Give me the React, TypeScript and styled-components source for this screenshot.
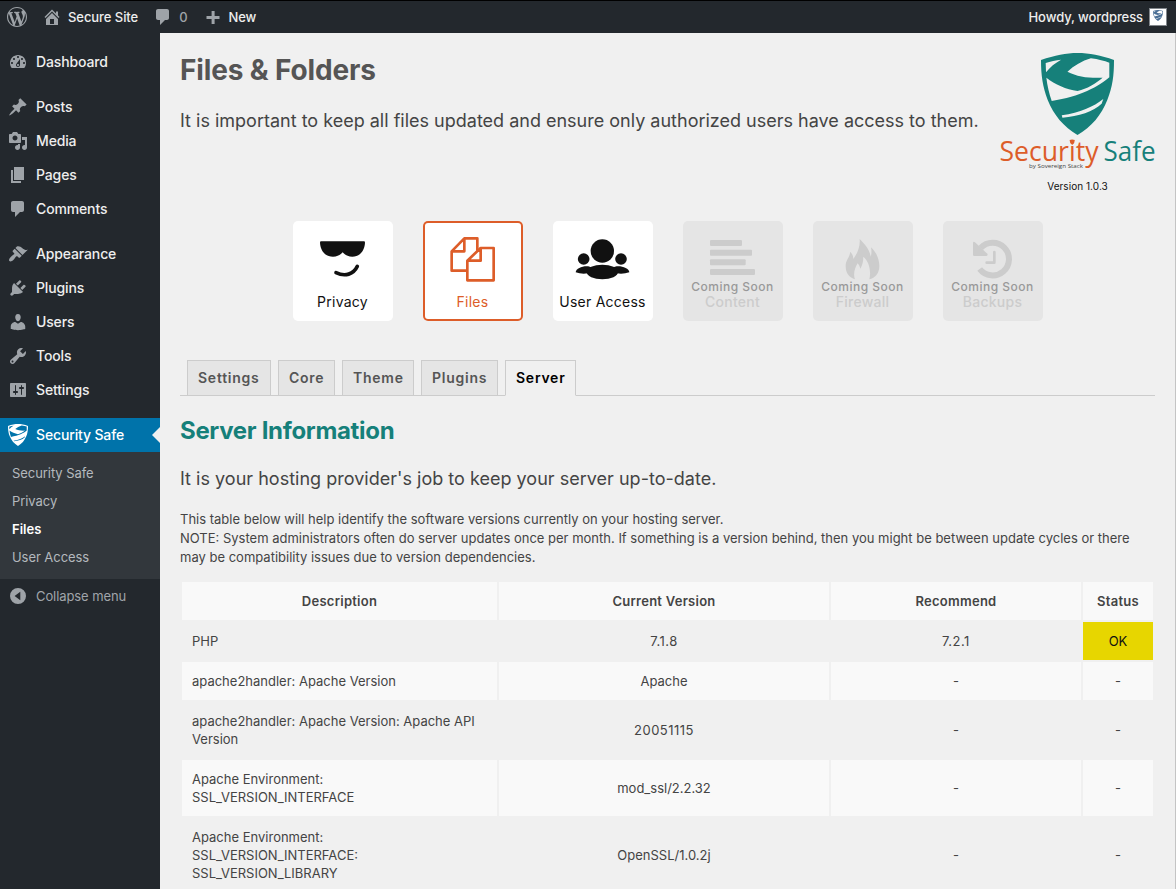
import React from "react";
import styled, { createGlobalStyle, css } from "styled-components";

const GlobalStyle = createGlobalStyle`
  *, *::before, *::after { box-sizing: border-box; }
  html, body { margin: 0; padding: 0; }
  body {
    background: #f0f0f0;
    color: #444;
    font-family: Inter, "Liberation Sans", sans-serif;
    font-size: 13px;
    overflow: hidden;
  }
  h1, h2, p { margin: 0; }
`;

const Page = styled.div`
  display: flex;
  flex-direction: column;
  height: 889px;
  overflow: hidden;
`;

const AdminBar = styled.header`
  display: flex;
  align-items: center;
  flex: none;
  height: 33px;
  padding: 0 9px 0 7px;
  border-top: 1px solid #000;
  background: #23282d;
  color: #eee;
  font-weight: 500;
`;

const BarItem = styled.div<{ $gap: number; $after?: number; $spacing?: string; $muted?: boolean }>`
  display: flex;
  align-items: center;
  gap: ${(p) => p.$gap}px;
  margin-right: ${(p) => p.$after ?? 0}px;
  letter-spacing: ${(p) => p.$spacing ?? "0"};
  color: ${(p) => (p.$muted ? "#9ea3a8" : "#eee")};
`;

const Account = styled(BarItem)`
  margin-left: auto;
  letter-spacing: -0.09px;
`;

const Avatar = styled.span`
  display: flex;
  justify-content: center;
  width: 18px;
  height: 18px;
  padding-top: 1px;
  border: 1px solid #82878c;
  background: #fff;
`;

const Glyph = styled.svg`
  display: block;
  flex: none;
  fill: #9ea3a8;
`;

const Body = styled.div`
  display: flex;
  flex: 1;
  min-height: 0;
`;

const Sidebar = styled.nav`
  flex: none;
  width: 160px;
  padding-top: 12px;
  background: #23282d;
`;

const MenuGroup = styled.div`
  margin-bottom: 11px;
`;

const MenuItem = styled.div<{ $active?: boolean }>`
  position: relative;
  display: flex;
  align-items: center;
  gap: 8px;
  height: 34px;
  padding-left: 8px;
  color: #eee;
  font-size: 14px;
  font-weight: 500;
  letter-spacing: -0.14px;
  ${(p) =>
    p.$active &&
    css`
      background: #0073aa;
      color: #fff;
      &::after {
        content: "";
        position: absolute;
        right: 0;
        top: 9px;
        border: 8px solid transparent;
        border-right-color: #f0f0f0;
        border-left-width: 0;
      }
    `}
`;

const MenuText = styled.span`
  padding-bottom: 2px;
`;

const SubMenu = styled.div`
  padding: 7px 0 8px 12px;
  background: #32373c;
`;

const SubItem = styled.div<{ $current?: boolean }>`
  height: 28px;
  line-height: 28px;
  letter-spacing: ${(p) => (p.$current ? "0.04px" : "-0.06px")};
  color: ${(p) => (p.$current ? "#fff" : "#b4b9be")};
  font-weight: ${(p) => (p.$current ? 600 : 400)};
`;

const Collapse = styled.div`
  display: flex;
  align-items: center;
  gap: 8px;
  height: 34px;
  padding-left: 8px;
  color: #a0a5aa;
  letter-spacing: -0.09px;
`;

const Main = styled.main`
  flex: 1;
  min-width: 0;
  padding: 0 20px;
  border-right: 1px solid #c4c4c4;
`;

const Head = styled.div`
  display: flex;
  justify-content: space-between;
  height: 188px;
`;

const Title = styled.h1`
  margin-top: 20px;
  color: #555;
  font-size: 28px;
  font-weight: 700;
  line-height: 34px;
  letter-spacing: -0.13px;
`;

const Lead = styled.p`
  color: #444;
  font-size: 18px;
  line-height: 26px;
  white-space: nowrap;
`;

const HeadLead = styled(Lead)`
  margin-top: 21px;
`;

const Brand = styled.div`
  display: flex;
  flex-direction: column;
  align-items: center;
  flex: none;
  width: 156px;
  padding-top: 20px;
  color: #222;
`;

const Version = styled.span`
  padding-left: 1px;
  font-size: 10px;
  line-height: 14px;
  color: #111;
  letter-spacing: 0.05px;
`;

const Cards = styled.div`
  display: flex;
  justify-content: center;
  gap: 30px;
  padding-left: 1px;
`;

const Card = styled.div<{ $tone: "plain" | "active" | "disabled" }>`
  position: relative;
  display: flex;
  flex-direction: column;
  align-items: center;
  width: 100px;
  height: 100px;
  border-radius: 5px;
  color: ${(p) => ({ plain: "#111", active: "#dd5d29", disabled: "#ccc" })[p.$tone]};
  background: ${(p) => (p.$tone === "disabled" ? "#e5e5e5" : "#fff")};
  box-shadow: ${(p) => (p.$tone === "active" ? "inset 0 0 0 2px #dd5d29" : "none")};
`;

const CardLabel = styled.span<{ $disabled?: boolean }>`
  margin-top: 2px;
  padding-right: 1px;
  font-size: 14px;
  line-height: 18px;
  font-weight: ${(p) => (p.$disabled ? 500 : 400)};
  letter-spacing: 0.25px;
  white-space: nowrap;
`;

const Soon = styled.span`
  position: absolute;
  top: 57px;
  left: 0;
  right: 1px;
  text-align: center;
  color: #999;
  font-size: 12px;
  line-height: 18px;
  font-weight: 500;
  letter-spacing: 0.5px;
  white-space: nowrap;
`;

const CardArt = styled.svg`
  display: block;
  width: 100px;
  height: 70px;
  fill: currentColor;
`;

const Tabs = styled.div`
  display: flex;
  gap: 7px;
  height: 36px;
  margin-top: 39px;
  padding-left: 7px;
  box-shadow: inset 0 -1px 0 #ccc;
`;

const Tab = styled.div<{ $w: number; $active?: boolean }>`
  width: ${(p) => p.$w}px;
  border: 1px solid #ccc;
  border-bottom-color: ${(p) => (p.$active ? "#f0f0f0" : "#ccc")};
  background: ${(p) => (p.$active ? "#f0f0f0" : "#e5e5e5")};
  color: ${(p) => (p.$active ? "#000" : "#555")};
  padding-left: 10px;
  font-size: 14px;
  font-weight: 600;
  line-height: 34px;
  letter-spacing: 0.75px;
`;

const Heading = styled.h2`
  margin-top: 19px;
  color: #16807a;
  font-size: 24px;
  font-weight: 700;
  line-height: 32px;
  letter-spacing: -0.32px;
`;

const SectionLead = styled(Lead)`
  margin-top: 19px;
  letter-spacing: 0.015px;
`;

const Notes = styled.p`
  margin: 18px 0 13px;
  line-height: 19px;
  white-space: nowrap;
`;

const Table = styled.table`
  width: 975px;
  table-layout: fixed;
  border-spacing: 2px;
  line-height: 18px;
`;

const Cell = styled.td<{ $left?: boolean; $ok?: boolean; $numeric?: boolean }>`
  padding: 10px;
  text-align: ${(p) => (p.$left ? "left" : "center")};
  vertical-align: middle;
  letter-spacing: ${(p) => (p.$numeric ? "0.5px" : "0")};
  ${(p) => p.$ok && "background: #e7d600 !important; color: #111;"}
`;

const Row = styled.tr<{ $light?: boolean }>`
  & > * { background: ${(p) => (p.$light ? "#f9f9f9" : "transparent")}; }
`;

const HeadCell = styled.th`
  padding: 10px 0;
  font-weight: 600;
  letter-spacing: 0.26px;
`;

const icons: Record<string, string> = {
  wordpress:
    "M20 10c0-5.51-4.49-10-10-10C4.48 0 0 4.49 0 10c0 5.52 4.48 10 10 10 5.51 0 10-4.48 10-10zM7.78 15.37L4.37 6.22c.55-.02 1.17-.08 1.17-.08.5-.06.44-1.13-.06-1.11 0 0-1.45.11-2.37.11-.18 0-.37 0-.58-.01C4.12 2.69 6.87 1.11 10 1.11c2.33 0 4.45.87 6.05 2.34-.68-.11-1.65.39-1.65 1.58 0 .74.45 1.36.9 2.1.35.61.55 1.36.55 2.46 0 1.49-1.4 5-1.4 5l-3.03-8.37c.54-.02.82-.17.82-.17.5-.05.44-1.25-.06-1.22 0 0-1.44.12-2.38.12-.87 0-2.33-.12-2.33-.12-.5-.03-.56 1.2-.06 1.22l.92.08 1.26 3.41zM17.41 10c.24-.64.74-1.87.43-4.25.7 1.29 1.05 2.71 1.05 4.25 0 3.29-1.73 6.24-4.4 7.78.97-2.59 1.94-5.2 2.92-7.78zM6.1 18.09C3.12 16.65 1.11 13.53 1.11 10c0-1.3.23-2.48.72-3.59C3.25 10.3 4.67 14.2 6.1 18.09zm4.03-6.63l2.58 6.98c-.86.29-1.76.45-2.71.45-.79 0-1.57-.11-2.29-.33.81-2.38 1.62-4.74 2.42-7.1z",
  home: "M16 8.5l1.53 1.53-1.06 1.06L10 4.6l-6.47 6.49-1.06-1.06L10 2.5l4 4v-2h2v4zm-6-2.46l6 5.99V18H4v-5.97zM12 17v-5H8v5h4z",
  plus: "M16.5 8.9h-4.9V4H8.6v4.9H3.5v3h5.1V17h3v-5.1h4.9z",
  dashboard:
    "M3.76 16h12.48c1.1-1.37 1.76-3.11 1.76-5 0-4.42-3.58-8-8-8s-8 3.58-8 8c0 1.89.66 3.63 1.76 5zM10 4c.55 0 1 .45 1 1s-.45 1-1 1-1-.45-1-1 .45-1 1-1zM6 6c.55 0 1 .45 1 1s-.45 1-1 1-1-.45-1-1 .45-1 1-1zm8 0c.55 0 1 .45 1 1s-.45 1-1 1-1-.45-1-1 .45-1 1-1zm-5.37 5.55L12 7v6c0 1.1-.9 2-2 2s-2-.9-2-2c0-.57.24-1.08.63-1.45zM4 10c.55 0 1 .45 1 1s-.45 1-1 1-1-.45-1-1 .45-1 1-1zm12 0c.55 0 1 .45 1 1s-.45 1-1 1-1-.45-1-1 .45-1 1-1zm-5 3c0-.55-.45-1-1-1s-1 .45-1 1 .45 1 1 1 1-.45 1-1z",
  posts:
    "M10.44 3.02l1.82-1.82 6.36 6.35-1.83 1.82c-1.05-.68-2.48-.57-3.41.36l-.75.75c-.92.93-1.04 2.35-.35 3.41l-1.83 1.82-2.41-2.41-2.8 2.79c-.42.42-3.38 2.71-3.8 2.29s1.86-3.39 2.28-3.81l2.79-2.79L4.1 9.36l1.83-1.82c1.05.69 2.48.57 3.4-.36l.75-.75c.93-.92 1.05-2.35.36-3.41z",
  media:
    "M13 11V4c0-.55-.45-1-1-1h-1.67L9 1H5L3.67 3H2c-.55 0-1 .45-1 1v7c0 .55.45 1 1 1h10c.55 0 1-.45 1-1zM7 4.5c1.38 0 2.5 1.12 2.5 2.5S8.38 9.5 7 9.5 4.5 8.38 4.5 7 5.62 4.5 7 4.5zM14 6h5v10.5c0 1.38-1.12 2.5-2.5 2.5S14 17.88 14 16.5s1.12-2.5 2.5-2.5c.17 0 .34.02.5.05V9h-3V6zm-4 8.05V13h2v3.5c0 1.38-1.12 2.5-2.5 2.5S7 17.88 7 16.5 8.12 14 9.5 14c.17 0 .34.02.5.05z",
  pages: "M6 15V2h10v13H6zm-1 1h8v2H3V5h2v11z",
  comments: "M5 2h9c1.1 0 2 .9 2 2v7c0 1.1-.9 2-2 2h-2l-5 5v-5H5c-1.1 0-2-.9-2-2V4c0-1.1.9-2 2-2z",
  appearance:
    "M14.48 11.06L7.41 3.99l1.5-1.5c.5-.56 2.3-.47 3.51.32 1.21.8 1.43 1.28 2.91 2.1 1.18.64 2.45 1.26 4.45.85zm-.71.71L6.7 4.7 4.93 6.47c-.39.39-.39 1.02 0 1.41l1.06 1.06c.39.39.39 1.03 0 1.42-.6.6-1.43 1.11-2.21 1.69-.35.26-.7.53-1.01.84C1.43 14.23.4 16.08 1.4 17.07c.99 1 2.84-.03 4.18-1.36.31-.31.58-.66.85-1.02.57-.78 1.08-1.61 1.69-2.21.39-.39 1.02-.39 1.41 0l1.06 1.06c.39.39 1.02.39 1.41 0z",
  plugins:
    "M13.11 4.36L9.87 7.6 8 5.73l3.24-3.24c.35-.34 1.05-.2 1.56.32.52.51.66 1.21.31 1.55zm-8 1.77l.91-1.12 9.01 9.01-1.19.84c-.71.71-2.63 1.16-3.82 1.16H6.14L4.9 17.26c-.59.59-1.54.59-2.12 0-.59-.58-.59-1.53 0-2.12l1.24-1.24v-3.88c0-1.13.4-3.19 1.09-3.89zm7.26 3.97l3.24-3.24c.34-.35 1.04-.21 1.55.31.52.51.66 1.21.31 1.55l-3.24 3.25z",
  users:
    "M10 9.25c-2.27 0-2.73-3.44-2.73-3.44C7 4.02 7.82 2 9.97 2c2.16 0 2.98 2.02 2.71 3.81 0 0-.41 3.44-2.68 3.44zm0 2.57L12.72 10c2.39 0 4.52 2.33 4.52 4.53v2.49s-3.65 1.13-7.24 1.13c-3.65 0-7.24-1.13-7.24-1.13v-2.49c0-2.25 1.94-4.48 4.47-4.48z",
  tools:
    "M16.68 9.77c-1.34 1.34-3.3 1.67-4.95.99l-5.41 6.52c-.99.99-2.59.99-3.58 0s-.99-2.59 0-3.57l6.52-5.42c-.68-1.65-.35-3.61.99-4.95 1.28-1.28 3.12-1.62 4.72-1.06l-2.89 2.89 2.82 2.82 2.86-2.87c.53 1.58.18 3.39-1.08 4.65zM3.81 16.21c.4.39 1.04.39 1.43 0 .4-.4.4-1.04 0-1.43-.39-.4-1.03-.4-1.43 0-.39.39-.39 1.03 0 1.43z",
  settings:
    "M18 16V4c0-.55-.45-1-1-1H3c-.55 0-1 .45-1 1v12c0 .55.45 1 1 1h14c.55 0 1-.45 1-1zM8 11h1c.55 0 1 .45 1 1s-.45 1-1 1H8v1.5c0 .28-.22.5-.5.5s-.5-.22-.5-.5V13H6c-.55 0-1-.45-1-1s.45-1 1-1h1V5.5c0-.28.22-.5.5-.5s.5.22.5.5V11zm5-2h-1c-.55 0-1-.45-1-1s.45-1 1-1h1V5.5c0-.28.22-.5.5-.5s.5.22.5.5V7h1c.55 0 1 .45 1 1s-.45 1-1 1h-1v5.5c0 .28-.22.5-.5.5s-.5-.22-.5-.5V9z",
  collapse: "M10 2a8 8 0 1 0 0 16a8 8 0 1 0 0-16zM12.3 5.8v8.4L6.6 10z",
};

function Icon({ name, size = 20 }: { name: string; size?: number }) {
  return (
    <Glyph viewBox="0 0 20 20" width={size} height={size} fillRule="evenodd">
      <path d={icons[name]} />
    </Glyph>
  );
}

function Shield({ width, height, color }: { width: number; height: number; color: string }) {
  return (
    <svg width={width} height={height} viewBox="33 24 218 246" preserveAspectRatio="none" fill={color} fillRule="evenodd">
      <path d="M33 45C75 31 108 24 142 24C177 24 212 31 251 45C251 92 247 125 231 165C213 210 184 246 142 270C101 246 71 210 53 165C38 125 33 92 33 45ZM47 54C60 49 78 45 93 44C75 54 60 66 48 82ZM182 40C205 43 222 48 237 53V97C205 125 150 155 65 168C57 145 52 122 49 98C75 118 108 133 142 138C172 131 195 116 217 98C180 100 142 96 112 80C132 62 155 48 182 40ZM219 162C190 185 150 203 95 211L97 218C145 213 190 200 214 176Z" />
    </svg>
  );
}

const WordmarkArt = styled.svg`
  display: block;
  overflow: visible;
`;

function Wordmark() {
  return (
    <WordmarkArt width="156" height="44" viewBox="0 0 156 44">
      <g fontFamily="'Open Sans', 'Noto Sans', sans-serif" fontSize="28">
        <text x="0.5" y="25.5" textLength="99" lengthAdjust="spacingAndGlyphs" fill="#dd5d29">Security</text>
        <text x="104.5" y="25.5" textLength="52" lengthAdjust="spacingAndGlyphs" fill="#16807a">Safe</text>
      </g>
      <path d="M70.6 5Q73.1 3.8 75.8 5Q75.8 8.4 73.2 10Q70.6 8.4 70.6 5Z" fill="#dd5d29" />
      <text x="30" y="33.3" fontFamily="'Open Sans', sans-serif" fontSize="5.8" fontWeight="500" textLength="54" lengthAdjust="spacingAndGlyphs" fill="#444">
        by Sovereign Stack
      </text>
    </WordmarkArt>
  );
}

const art = {
  privacy: (
    <CardArt viewBox="39 33 300 210">
      <path d="M123 94H252Q255 94 255 98C254 122 239 140 217 140C202 140 193 133 188 127C183 133 174 140 159 140C136 140 121 122 120 98Q120 94 123 94Z" />
      <path d="M168 188C195 201 221 193 232 169" fill="none" stroke="currentColor" strokeWidth="11" strokeLinecap="round" />
    </CardArt>
  ),
  files: (
    <CardArt viewBox="429 33 300 210">
      <g fill="none" stroke="currentColor" strokeWidth="8" strokeLinejoin="round">
        <path d="M562 182H515V124L553 85H592V122M553 85V124H515" />
        <path d="M562 152L602 114H641V211H562ZM602 114V152H562" />
      </g>
    </CardArt>
  ),
  users: (
    <CardArt viewBox="819 33 300 210">
      <circle cx="967" cy="123" r="35" />
      <circle cx="911" cy="147" r="17.5" />
      <circle cx="1023" cy="147" r="17.5" />
      <ellipse cx="967" cy="186" rx="47" ry="22" />
      <path d="M887 187C888 171 924 163 937 174L924 190Q904 193 887 187Z" />
      <path d="M1048 187C1047 171 1010 163 997 174L1010 190Q1030 193 1048 187Z" />
    </CardArt>
  ),
  content: (
    <CardArt viewBox="39 33 300 210">
      <rect x="120" y="90" width="96" height="18" rx="3" />
      <rect x="120" y="119" width="126" height="18" rx="3" />
      <rect x="120" y="148" width="107" height="18" rx="3" />
      <rect x="120" y="177" width="135" height="18" rx="3" />
    </CardArt>
  ),
  firewall: (
    <CardArt viewBox="429 33 300 210">
      <path d="M569 87C585 103 600 120 602 140C605 132 605 120 603 112C620 128 628 148 628 168C628 190 615 205 598 208C604 185 598 155 580 140C580 155 577 165 571 176C569 168 566 163 563 160C556 172 548 190 555 208C538 203 527 190 527 168C527 150 538 145 541 125C546 130 550 138 550 147C562 130 571 110 569 87Z" />
    </CardArt>
  ),
  backups: (
    <CardArt viewBox="819 33 300 210">
      <path d="M932 114A49 49 0 1 1 929 177" fill="none" stroke="currentColor" strokeWidth="18" />
      <path d="M909 98Q910 93 915 97L952 131Q955 137 949 138H913Q909 138 909 134Z" />
      <path d="M973 126V158H950" fill="none" stroke="currentColor" strokeWidth="8" strokeLinecap="round" strokeLinejoin="round" />
    </CardArt>
  ),
};

const cards: { label: string; art: keyof typeof art; tone: "plain" | "active" | "disabled" }[] = [
  { label: "Privacy", art: "privacy", tone: "plain" },
  { label: "Files", art: "files", tone: "active" },
  { label: "User Access", art: "users", tone: "plain" },
  { label: "Content", art: "content", tone: "disabled" },
  { label: "Firewall", art: "firewall", tone: "disabled" },
  { label: "Backups", art: "backups", tone: "disabled" },
];

const menu = [
  ["Dashboard"],
  ["Posts", "Media", "Pages", "Comments"],
  ["Appearance", "Plugins", "Users", "Tools", "Settings"],
];

const tabs: [string, number][] = [
  ["Settings", 84],
  ["Core", 57],
  ["Theme", 72],
  ["Plugins", 77],
  ["Server", 71],
];

const rows = [
  ["PHP", "7.1.8", "7.2.1", "OK"],
  ["apache2handler: Apache Version", "Apache", "-", "-"],
  ["apache2handler: Apache Version: Apache API Version", "20051115", "-", "-"],
  ["Apache Environment: SSL_VERSION_INTERFACE", "mod_ssl/2.2.32", "-", "-"],
  ["Apache Environment: SSL_VERSION_INTERFACE: SSL_VERSION_LIBRARY", "OpenSSL/1.0.2j", "-", "-"],
];

export default function App() {
  return (
    <Page>
      <GlobalStyle />
      <AdminBar>
        <BarItem $gap={0} $after={15}>
          <Icon name="wordpress" />
        </BarItem>
        <BarItem $gap={6} $after={15} $spacing="-0.06px">
          <Icon name="home" />
          Secure Site
        </BarItem>
        <BarItem $gap={6} $after={15} $muted>
          <Icon name="comments" />
          0
        </BarItem>
        <BarItem $gap={6} $spacing="-0.2px">
          <Icon name="plus" />
          New
        </BarItem>
        <Account $gap={6}>
          Howdy, wordpress
          <Avatar>
            <Shield width={10} height={11} color="#4a6f95" />
          </Avatar>
        </Account>
      </AdminBar>
      <Body>
        <Sidebar>
          {menu.map((group) => (
            <MenuGroup key={group[0]}>
              {group.map((item) => (
                <MenuItem key={item}>
                  <Icon name={item.toLowerCase()} />
                  <MenuText>{item}</MenuText>
                </MenuItem>
              ))}
            </MenuGroup>
          ))}
          <MenuItem $active>
            <Shield width={20} height={22} color="#fff" />
            <MenuText>Security Safe</MenuText>
          </MenuItem>
          <SubMenu>
            {["Security Safe", "Privacy", "Files", "User Access"].map((item) => (
              <SubItem key={item} $current={item === "Files"}>
                {item}
              </SubItem>
            ))}
          </SubMenu>
          <Collapse>
            <Icon name="collapse" />
            Collapse menu
          </Collapse>
        </Sidebar>
        <Main>
          <Head>
            <div>
              <Title>Files &amp; Folders</Title>
              <HeadLead>It is important to keep all files updated and ensure only authorized users have access to them.</HeadLead>
            </div>
            <Brand>
              <Shield width={73} height={82} color="#16807a" />
              <Wordmark />
              <Version>Version 1.0.3</Version>
            </Brand>
          </Head>
          <Cards>
            {cards.map((card) => (
              <Card key={card.label} $tone={card.tone}>
                {art[card.art]}
                {card.tone === "disabled" && <Soon>Coming Soon</Soon>}
                <CardLabel $disabled={card.tone === "disabled"}>{card.label}</CardLabel>
              </Card>
            ))}
          </Cards>
          <Tabs>
            {tabs.map(([label, width]) => (
              <Tab key={label} $w={width} $active={label === "Server"}>
                {label}
              </Tab>
            ))}
          </Tabs>
          <Heading>Server Information</Heading>
          <SectionLead>It is your hosting provider's job to keep your server up-to-date.</SectionLead>
          <Notes>
            This table below will help identify the software versions currently on your hosting server.
            <br />
            NOTE: System administrators often do server updates once per month. If something is a version behind, then you might be between update cycles or there
            <br />
            may be compatibility issues due to version dependencies.
          </Notes>
          <Table>
            <colgroup>
              <col style={{ width: 315 }} />
              <col style={{ width: 330 }} />
              <col style={{ width: 250 }} />
              <col style={{ width: 70 }} />
            </colgroup>
            <thead>
              <Row $light>
                {["Description", "Current Version", "Recommend", "Status"].map((name) => (
                  <HeadCell key={name}>{name}</HeadCell>
                ))}
              </Row>
            </thead>
            <tbody>
              {rows.map((row, index) => (
                <Row key={row[0]} $light={index % 2 === 1}>
                  {row.map((value, column) => (
                    <Cell key={column} $left={column === 0} $ok={value === "OK"} $numeric={/^[\d.]+$/.test(value)}>
                      {value}
                    </Cell>
                  ))}
                </Row>
              ))}
            </tbody>
          </Table>
        </Main>
      </Body>
    </Page>
  );
}
